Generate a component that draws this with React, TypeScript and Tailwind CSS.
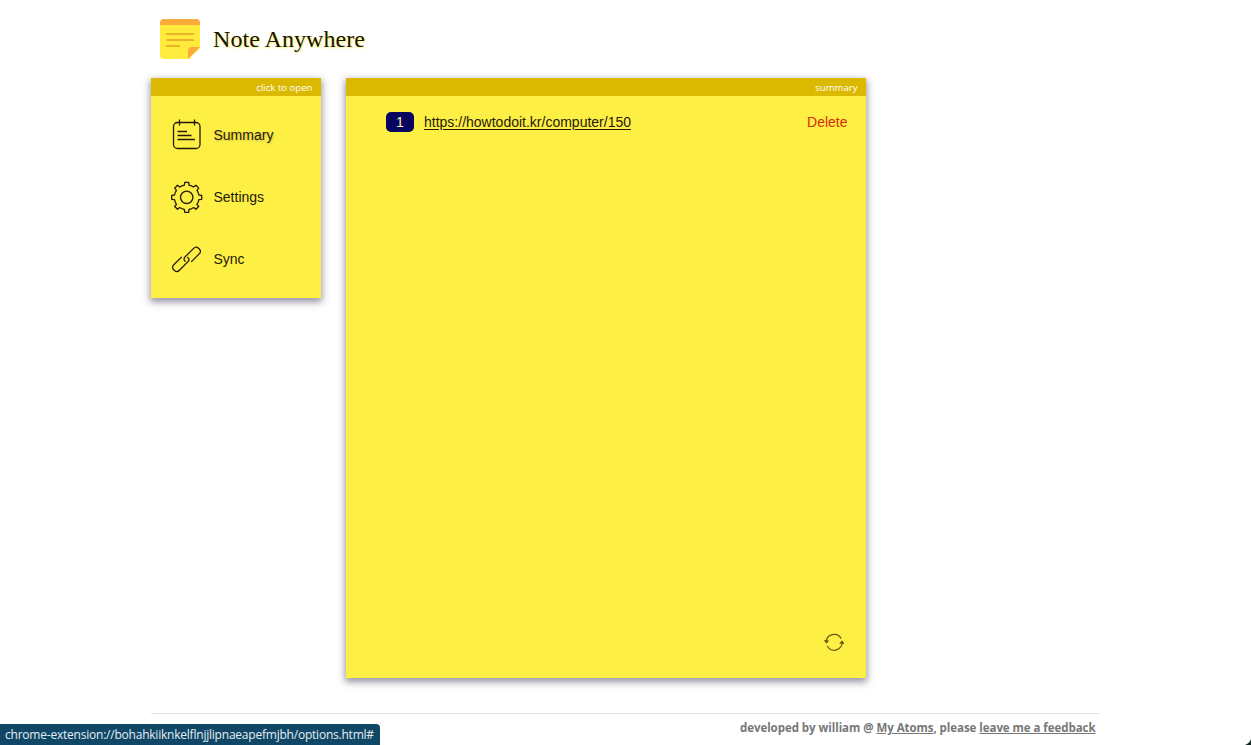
import React from 'react';

const menu = [
    { label: 'Summary', icon: SummaryIcon, active: true },
    { label: 'Settings', icon: GearIcon, active: false },
    { label: 'Sync', icon: LinkIcon, active: false },
];

const notes = [{ count: 1, url: 'https://howtodoit.kr/computer/150' }];

function LogoIcon() {
    return (
        <svg className="w-10 h-10 shrink-0" viewBox="0 0 40 40">
            <path d="M0 4h40v25L29 40H4a4 4 0 0 1-4-4z" fill="#ffeb3b" />
            <path d="M4 0h32a4 4 0 0 1 4 4v2H0V4a4 4 0 0 1 4-4z" fill="#fbab3c" />
            <path d="M28 40v-8a4 4 0 0 1 4-4h8z" fill="#fbab3c" />
            <path d="M6 15h28M6 21h28M6 27h14" stroke="#e9b32c" strokeWidth="2" />
        </svg>
    );
}

function SummaryIcon() {
    return (
        <svg className="w-8 h-8 shrink-0" viewBox="0 0 32 32" fill="none" stroke="#251a08" strokeWidth="1.3">
            <rect x="2.5" y="3.5" width="26.5" height="26" rx="4" />
            <path d="M8.5 0.5v6M23.5 0.5v6M6.5 12.5h9.500M6.500 16.500h14M6.500 20.500h17.500" />
        </svg>
    );
}

// eight square teeth joined by short arcs
function gearPath(outer: number, inner: number) {
    const parts: string[] = [];
    for (let i = 0; i < 8; i++) {
        const a = (i * Math.PI) / 4;
        const at = (r: number, w: number) =>
            `${(16 + r * Math.cos(a) - w * Math.sin(a)).toFixed(2)} ${(16 + r * Math.sin(a) + w * Math.cos(a)).toFixed(2)}`;
        parts.push(i === 0 ? `M${at(inner, -2.3)}` : `A12 12 0 0 1 ${at(inner, -2.3)}`);
        parts.push(`L${at(outer, -2)}L${at(outer, 2)}L${at(inner, 2.3)}`);
    }
    return `${parts.join('')}A12 12 0 0 1 ${(16 + inner).toFixed(2)} 13.7Z`;
}

function GearIcon() {
    return (
        <svg className="w-8 h-8 shrink-0" viewBox="0.3 -0.3 32 32" fill="none" stroke="#251a08" strokeWidth="1.3">
            <path d={gearPath(15, 12.2)} strokeLinejoin="round" />
            <circle cx="16" cy="16" r="6.2" />
        </svg>
    );
}

function LinkIcon() {
    return (
        <svg className="w-8 h-8 shrink-0" viewBox="0.5 -0.3 32 32" fill="none" stroke="#251a08" strokeWidth="1.3" strokeLinecap="round">
            <path d="M11 13.8L3.3 21.5Q0.8 24 3.2 26.4L4 27.2Q6.4 29.5 8.9 27L17.3 18.6Q19.7 16.1 17.3 14.2" />
            <path d="M21 18.3L28.7 10.6Q31.2 8.1 28.8 5.7L28 4.9Q25.6 2.6 23.1 5.1L14.7 13.5Q12.3 16 14.7 17.9" />
        </svg>
    );
}

function RefreshIcon() {
    return (
        <svg className="w-5 h-5" viewBox="0 0 20 20" fill="none" stroke="#6b4f12" strokeWidth="1.2">
            <path d="M2.2 10.5A8 8 0 0 1 17.2 6.500M18.200 9.500A8 8 0 0 1 3.200 14" />
            <path d="M0.300 8.300l2 2.900 2.500-2.400zM15.700 11.200l2.500-2.400 2 2.900z" fill="#6b4f12" strokeWidth="0.5" />
        </svg>
    );
}

function Panel({ title, className, children }: { title: string; className: string; children: React.ReactNode }) {
    return (
        <section className={`flex flex-col bg-[#fdef44] shadow-[0_3px_7px_1px_rgba(50,40,70,0.5)] ${className}`}>
            <div className="h-[18px] shrink-0 bg-[#dbb900] pr-[8.5px] text-right font-['Open_Sans',sans-serif] text-[9.6px] font-medium leading-[19px] text-white">
                {title}
            </div>
            {children}
        </section>
    );
}

export default function App() {
    return (
        <div className="relative flex h-[745px] flex-col overflow-hidden bg-white pl-[151px] font-['Liberation_Sans',sans-serif] text-sm text-[#251a08]">
            <header className="flex h-[78px] shrink-0 items-center pl-[9px] gap-[13px]">
                <LogoIcon />
                <h1 className="font-['Liberation_Serif',serif] text-2xl text-[#161605] tracking-[0.05px] [text-shadow:1px_1px_2px_#ffee55]">
                    Note Anywhere
                </h1>
            </header>

            <main className="flex shrink-0 items-start gap-[25px]">
                <Panel title="click to open" className="h-[220px] w-[170px]">
                    <nav className="flex flex-col pt-[8px]">
                        {menu.map(({ label, icon: Icon, active }) => (
                            <a
                                key={label}
                                href="#"
                                className={`flex h-[62px] items-center gap-[11px] pl-[19.5px] ${active ? '[text-shadow:1px_1px_2px_rgba(120,110,60,0.35)]' : ''}`}
                            >
                                <Icon />
                                {label}
                            </a>
                        ))}
                    </nav>
                </Panel>

                <Panel title="summary" className="h-[600px] w-[520px]">
                    <ul className="flex-1 pt-4">
                        {notes.map((note) => (
                            <li key={note.url} className="flex h-5 items-center pl-10 pr-[18.5px]">
                                <span className="mr-[10px] h-5 w-7 rounded-[5px] bg-[#08045f] text-center leading-5 text-[#fdf3b0]">
                                    {note.count}
                                </span>
                                <a href="#" className="underline underline-offset-[1.5px]">{note.url}</a>
                                <button className="ml-auto text-[#d92c08]">Delete</button>
                            </li>
                        ))}
                    </ul>
                    <div className="flex justify-end pb-[26px] pr-[22px]">
                        <RefreshIcon />
                    </div>
                </Panel>
            </main>

            <footer className="mt-[35px] w-[949px] border-t border-[#e4e4e4] pr-[4.5px] pt-[5px] text-right font-['Open_Sans',sans-serif] text-[11.5px] font-bold leading-[18px] tracking-[-0.05px] text-[#777]">
                developed by william @ <a href="#" className="underline">My Atoms</a>, please{' '}
                <a href="#" className="underline">leave me a feedback</a>
            </footer>

            {/* Browser status bubble */}
            <div className="absolute bottom-0 left-0 h-[21px] w-[380px] rounded-tr-[4px] bg-[#114766] pl-[5px] font-['Open_Sans',sans-serif] text-xs leading-[21px] tracking-[-0.22px] text-[#e5edf2] whitespace-nowrap">
                chrome-extension://bohahkiiknkelflnjjlipnaeapefmjbh/options.html#
            </div>
            <svg className="absolute bottom-0 right-0 h-[6px] w-[6px]" viewBox="0 0 6 6">
                <path d="M6 0v6H0Q4.5 4.5 6 0z" fill="#10221f" />
            </svg>
        </div>
    );
}
